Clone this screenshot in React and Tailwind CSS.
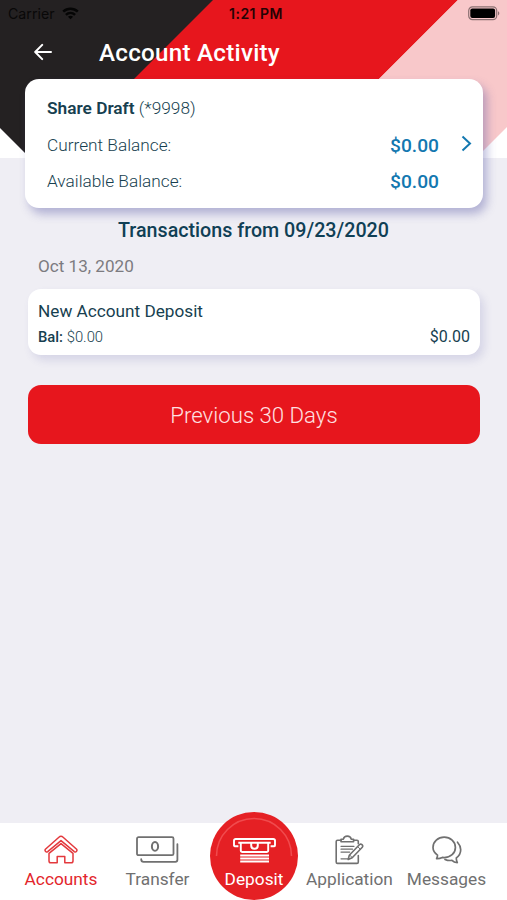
import React from "react";

function StatusBar() {
  return (
    <div className="flex h-7 items-center pl-2 pr-[7px] text-black">
      <div className="flex flex-1 items-center gap-[7px]">
        <span className="text-[14.2px] leading-7 text-[#090808] font-['Inter',sans-serif]">Carrier</span>
        <svg className="-mt-[2px]" width="17" height="13" viewBox="0 0 17 13" fill="none" stroke="#050505" strokeWidth="2.5">
          <path d="M1.2 4.7C5.3 .8 11.7 .8 15.8 4.7" />
          <path d="M3.9 7.8C6.6 5.3 10.4 5.3 13.1 7.8" />
          <path d="M8.5 12.3 5.9 9.7C7.5 8.4 9.5 8.4 11.1 9.7Z" fill="#050505" stroke="none" />
        </svg>
      </div>
      <span className="ml-[4px] text-[14px] leading-7 font-semibold tracking-[0.5px] text-[#250304] font-['Inter',sans-serif]">1:21 PM</span>
      <div className="flex flex-1 justify-end">
        <svg className="-mt-[2px]" width="32" height="15" viewBox="0 0 32 15">
          <rect x=".7" y=".9" width="28" height="12.7" rx="3.8" fill="none" stroke="#8b7072" strokeWidth="1.2" />
          <rect x="2.3" y="2.6" width="24.8" height="9.3" rx="2" fill="#000" />
          <path d="M30 5.2C31.8 5.9 31.8 8.7 30 9.4Z" fill="#8b7072" />
        </svg>
      </div>
    </div>
  );
}

function HouseIcon() {
  return (
    <svg width="34" height="30" viewBox="0 0 34 30" fill="none" stroke="#e3393d" strokeWidth="1.5" strokeLinejoin="round" strokeLinecap="round">
      <path d="M17 1.3Q15.9 1.3 14.9 2.2L1.4 14.2C.4 15.4 1.9 17.9 3.7 16.6L17 5.6 30.3 16.6C32.1 17.9 33.6 15.4 32.6 14.2L19.1 2.2Q18.1 1.3 17 1.3Z" />
      <path d="M5 18.4 17 8.6 29 18.4V26Q29 27.8 27.2 27.8H20.8V21.5H13.2V27.8H6.8Q5 27.8 5 26Z" />
    </svg>
  );
}

function MoneyIcon() {
  return (
    <svg width="43" height="28" viewBox="0 0 43 28" fill="none" stroke="#707070" strokeWidth="1.8" strokeLinecap="round">
      <rect x="1" y="1.2" width="36.5" height="18" rx="1.5" />
      <ellipse cx="19" cy="10.4" rx="3.1" ry="4.4" strokeWidth="2" />
      <path d="M41.4 8.2V23.8Q41.4 25.8 39.4 25.8H7.6Q5.2 25.8 5.2 23.2" />
    </svg>
  );
}

function ClipboardIcon() {
  return (
    <svg width="29" height="30" viewBox="0 0 29 30" fill="none" stroke="#707070" strokeWidth="1.6" strokeLinecap="round" strokeLinejoin="round">
      <path d="M6 5.2H2.5Q1.2 5.2 1.2 6.5V27Q1.2 28.4 2.5 28.4H22Q23.3 28.4 23.3 27V20.5M18.6 5.2H22Q23.3 5.2 23.3 6.5V8.8" />
      <path d="M6 6.8V4.2H8.4C8.8 2.2 9.8 1.1 12.3 1.1S15.8 2.2 16.2 4.2H18.6V6.8Z" />
      <path d="M6 11.3H19M6 14.2H17.5M6 17.1H14.7M6 23.8H13" strokeWidth="1.2" />
      <path d="M14.3 20.2 24.6 9.5Q25.7 8.6 27 9.7T27.3 12.3L17.2 22.8 13.2 24.4Z" />
      <path d="m22.7 11.6 2.5 2.6M15 20.3l2.2 2.3" strokeWidth="1" />
    </svg>
  );
}

function ChatIcon() {
  return (
    <svg width="30" height="29" viewBox="0 0 30 29" fill="none" stroke="#707070" strokeWidth="1.7" strokeLinecap="round" strokeLinejoin="round">
      <path d="M4.6 22.6C5.5 21.5 5.5 20.2 5.5 19.1 2.7 17.1 1 14.5 1 11.5 1 5.7 6 1.2 12.2 1.2S23.4 5.7 23.4 11.5 18.4 21.6 12.2 21.6L10.3 21.4Q7.6 22.8 4.6 22.6Z" />
      <path d="M25.5 6.2C27.5 8.4 28.7 11.1 28.7 13.8 28.7 17.1 27 20 24.3 21.9 24.2 23.7 24.5 25.1 25.3 26.6 22.9 26.5 21.2 25.7 20 24.4 17.4 24.7 14.7 24.2 13 23.4" />
    </svg>
  );
}

function AtmIcon() {
  return (
    <svg width="43" height="25" viewBox="0 0 43 25" fill="none" stroke="#fff" strokeWidth="1.9">
      <path d="M5.4 8.2H1.8Q1 8.2 1 7.2V2.8Q1 1 2.8 1H40.2Q42 1 42 2.8V7.2Q42 8.2 41.2 8.2H37.6" />
      <path d="M5.3 4.7H37.7M7.8 4.7V12.5Q7.8 14 9.6 14H33.4Q35.2 14 35.2 12.5V4.7" />
      <path d="M18.2 5V7.4Q18.2 10.8 21.5 10.8T24.8 7.4V5" strokeWidth="2" />
      <path d="M7.2 17.5H36M7.2 20.5H36M7.2 23.5H36" strokeWidth="1.8" />
    </svg>
  );
}

function Tab({ icon, label, className, active = false }) {
  return (
    <div className={`flex flex-col items-center ${className}`}>
      <div className="flex h-[30px] items-center justify-center">{icon}</div>
      <span className={`mt-[2px] whitespace-nowrap text-[17.3px] leading-6 ${active ? "text-[#e3262c]" : "text-[#707070]"}`}>{label}</span>
    </div>
  );
}

export default function App() {
  return (
    <div className="relative isolate flex h-[900px] w-[507px] flex-col overflow-hidden bg-[#efeef4] font-['Roboto',sans-serif] text-[#173f50]">
      <svg className="absolute left-0 top-0 -z-10" width="507" height="158" viewBox="0 0 507 158">
        <rect width="507" height="158" fill="#fff" />
        <path d="M0 0H220V158H30L0 128Z" fill="#242122" />
        <path d="M213 0H458L300 158H55Z" fill="#e7161d" />
        <path d="M458 0H507V127L476 158H300Z" fill="#f8c8ca" />
      </svg>
      <StatusBar />
      <header className="flex h-[51px] items-center pl-[34px] text-white">
        <svg className="-mt-[3px]" width="19" height="18" viewBox="0 0 19 18" fill="none" stroke="#fff" strokeWidth="2" strokeLinecap="round" strokeLinejoin="round">
          <path d="M17 9H1.9M8.2 1.9 1.2 9l7 7.1" />
        </svg>
        <h1 className="-mt-[2px] ml-[46px] text-[24.2px] leading-[48px] font-medium tracking-[0.25px]">Account Activity</h1>
      </header>

      <section className="ml-[25px] flex h-[129px] w-[458px] shrink-0 rounded-[14px] bg-white pl-[22px] pr-[11px] pt-[11px] shadow-[4px_6px_10px_rgba(80,80,160,0.38)]">
        <div className="flex-1">
          <p className="h-9 text-[17.3px] leading-9"><span className="font-semibold">Share Draft</span> <span className="font-light">(*9998)</span></p>
          <div className="flex h-[38px] items-center justify-between pt-[2px]"><span className="text-[17.25px] font-light">Current Balance:</span><span className="text-[19.2px] font-medium text-[#1378b0]">$0.00</span></div>
          <div className="flex h-[35px] items-center justify-between"><span className="text-[17.25px] font-light">Available Balance:</span><span className="pt-[2px] text-[19.2px] font-medium text-[#1378b0]">$0.00</span></div>
        </div>
        <svg className="ml-[21px] mt-[45px]" width="12" height="17" viewBox="0 0 12 17" fill="none" stroke="#1378b0" strokeWidth="2">
          <path d="m2.5 1.5 7.5 7-7.5 7" />
        </svg>
      </section>

      <h2 className="mt-[9px] text-center text-[19.7px] leading-7 font-medium text-[#103f55]">Transactions from 09/23/2020</h2>
      <p className="ml-[38px] mt-[9px] text-[17.1px] leading-6 text-[#7c7b80]">Oct 13, 2020</p>
      <section className="ml-7 mt-[11px] h-[66px] w-[452px] shrink-0 rounded-[13px] bg-white px-[10px] pt-[10px] shadow-[4px_5px_8px_rgba(80,80,160,0.16)]">
        <p className="text-[17.2px] leading-6">New Account Deposit</p>
        <div className="flex h-[28px] items-center justify-between text-[15px]">
          <p className="text-[14.8px]"><span className="font-medium">Bal:</span> <span className="font-light">$0.00</span></p>
          <span className="text-[16px]">$0.00</span>
        </div>
      </section>
      <button className="ml-7 mt-[30px] h-[59px] w-[452px] shrink-0 rounded-[13px] bg-[#e7161d] pt-[3px] text-[22.2px] font-light text-[#ffe1e2]">Previous 30 Days</button>

      <nav className="mt-auto flex h-[77px] shrink-0 bg-white pt-[12px]">
        <Tab icon={<HouseIcon />} label="Accounts" className="ml-[16px] w-[90px]" active />
        <Tab icon={<MoneyIcon />} label="Transfer" className="ml-[6px] w-[91px]" />
        <div className="relative -mt-[23px] ml-[7px] flex h-[88px] w-[88px] flex-col items-center rounded-full bg-[#e52024] pt-[26px] text-white">
          <svg className="absolute left-0 top-0" width="88" height="88" viewBox="0 0 88 88" fill="none" stroke="#f04b4e" strokeWidth="1.6">
            <path d="M6.5 44A37.5 37.5 0 0 1 81.5 44" />
          </svg>
          <AtmIcon />
          <span className="mt-[4px] text-[17.3px] leading-6">Deposit</span>
        </div>
        <Tab icon={<ClipboardIcon />} label="Application" className="ml-[6px] w-[91px]" />
        <Tab icon={<ChatIcon />} label="Messages" className="ml-[6px] w-[91px]" />
      </nav>
    </div>
  );
}
